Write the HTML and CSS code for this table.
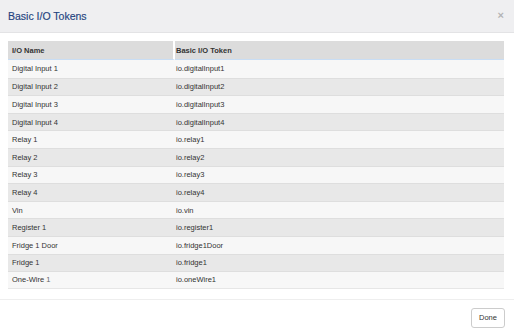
FILE: index.html
```html
<!DOCTYPE html>
<html>
<head>
<meta charset="utf-8">
<link rel="stylesheet" href="styles.css">
</head>
<body>
<div class="modal">
  <div class="modal-header">
    <h4 class="modal-title">Basic I/O Tokens</h4>
    <span class="close">×</span>
  </div>
  <div class="modal-body">
    <table class="tokens">
      <thead>
        <tr><th class="c1">I/O Name</th><th class="c2">Basic I/O Token</th></tr>
      </thead>
      <tbody>
        <tr><td>Digital Input 1</td><td class="c2">io.digitalInput1</td></tr>
        <tr><td>Digital Input 2</td><td class="c2">io.digitalInput2</td></tr>
        <tr><td>Digital Input 3</td><td class="c2">io.digitalInput3</td></tr>
        <tr><td>Digital Input 4</td><td class="c2">io.digitalInput4</td></tr>
        <tr><td>Relay 1</td><td class="c2">io.relay1</td></tr>
        <tr><td>Relay 2</td><td class="c2">io.relay2</td></tr>
        <tr><td>Relay 3</td><td class="c2">io.relay3</td></tr>
        <tr><td>Relay 4</td><td class="c2">io.relay4</td></tr>
        <tr><td>Vin</td><td class="c2">io.vin</td></tr>
        <tr><td>Register 1</td><td class="c2">io.register1</td></tr>
        <tr><td>Fridge 1 Door</td><td class="c2">io.fridge1Door</td></tr>
        <tr><td>Fridge 1</td><td class="c2">io.fridge1</td></tr>
        <tr><td>One-Wire <span class="num">1</span></td><td class="c2">io.oneWire1</td></tr>
      </tbody>
    </table>
  </div>
  <div class="modal-footer">
    <button class="btn">Done</button>
  </div>
</div>
</body>
</html>
```
FILE: styles.css
```css
html, body {
  margin: 0;
  padding: 0;
  background: #ffffff;
}
body {
  font-family: "Liberation Sans", Arial, sans-serif;
  color: #333333;
  width: 514px;
  height: 336px;
  overflow: hidden;
}
.modal {
  display: flex;
  flex-direction: column;
}
.modal-header {
  height: 33px;
  box-sizing: border-box;
  background: #efeff1;
  border-bottom: 1px solid #e3e3e5;
  display: flex;
  align-items: center;
  justify-content: space-between;
  padding: 0 8px 1px 8px;
}
.modal-title {
  margin: 0;
  font-size: 10.5px;
  font-weight: normal;
  color: #23437f;
  -webkit-text-stroke: 0.15px #23437f;
}
.close {
  color: #b4b4b6;
  font-size: 11px;
  font-weight: bold;
  line-height: 1;
  margin-right: 2px;
}
.modal-body {
  padding: 8px 10px 10px 8px;
}
.tokens {
  width: 496px;
  border-collapse: separate;
  border-spacing: 0;
  font-size: 7.5px;
}
.tokens th {
  background: #dcdcdc;
  text-align: left;
  font-weight: bold;
  height: 19px;
  box-sizing: border-box;
  padding: 0 4px;
  border-bottom: 1px solid #c8ddf4;
  color: #333;
}
.tokens th.c1 {
  width: 167px;
  border-right: 2px solid #ffffff;
}
.tokens .c2 {
  padding-left: 1px;
}
.tokens td {
  height: 17.6px;
  box-sizing: border-box;
  padding: 0 4px;
  border-top: 1px solid #dedede;
  line-height: 9px;
}
.tokens td.c2 {
  padding-left: 1px;
}
.tokens tbody tr:nth-child(odd) td {
  background: #f7f7f7;
}
.tokens tbody tr:nth-child(even) td {
  background: #e8e8e8;
}
.tokens tbody tr:first-child td {
  border-top: none;
}
.tokens tbody tr:last-child td {
  border-bottom: 1px solid #e6e6e6;
}
.num {
  color: #666;
}
.modal-footer {
  border-top: 1px solid #eeeeee;
  display: flex;
  justify-content: flex-end;
  padding: 8px 9px 8px 8px;
}
.btn {
  font-family: "Liberation Sans", Arial, sans-serif;
  font-size: 7.5px;
  color: #333;
  background: #ffffff;
  border: 1px solid #cccccc;
  border-radius: 3px;
  width: 34px;
  height: 20px;
  padding: 0;
}
```
